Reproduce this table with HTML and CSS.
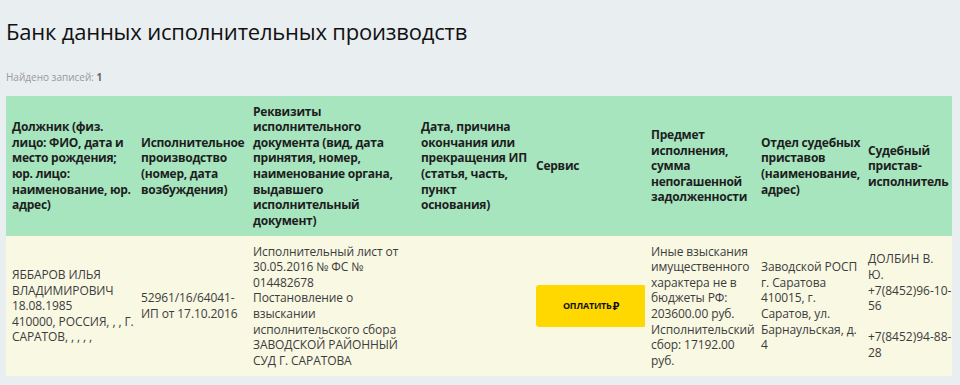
FILE: index.html
```html
<!DOCTYPE html>
<html lang="ru">
<head>
<meta charset="utf-8">
<title>Банк данных исполнительных производств</title>
<link rel="stylesheet" href="styles.css">
</head>
<body>
<div class="page">
  <h1 class="title">Банк данных исполнительных производств</h1>
  <div class="count">Найдено записей: <b>1</b></div>
  <table class="results">
    <colgroup>
      <col class="c1"><col class="c2"><col class="c3"><col class="c4">
      <col class="c5"><col class="c6"><col class="c7"><col class="c8">
    </colgroup>
    <thead>
      <tr>
        <th>Должник (физ. лицо: ФИО, дата и место рождения; юр. лицо: наименование, юр. адрес)</th>
        <th>Исполнительное производство (номер, дата возбуждения)</th>
        <th>Реквизиты исполнительного документа (вид, дата принятия, номер, наименование органа, выдавшего исполнительный документ)</th>
        <th>Дата, причина окончания или прекращения ИП (статья, часть, пункт<br>основания)</th>
        <th>Сервис</th>
        <th>Предмет исполнения, сумма непогашенной задолженности</th>
        <th>Отдел судебных приставов (наименование, адрес)</th>
        <th>Судебный пристав-исполнитель</th>
      </tr>
    </thead>
    <tbody>
      <tr>
        <td>ЯББАРОВ ИЛЬЯ ВЛАДИМИРОВИЧ<br>18.08.1985<br>410000, РОССИЯ, , , Г. САРАТОВ, , , , ,</td>
        <td>52961/16/64041-ИП от 17.10.2016</td>
        <td>Исполнительный лист от 30.05.2016 № ФС № 014482678<br>Постановление о взыскании исполнительского сбора<br>ЗАВОДСКОЙ РАЙОННЫЙ СУД Г. САРАТОВА</td>
        <td></td>
        <td><a class="pay" href="#">ОПЛАТИТЬ<span class="rub">₽</span></a></td>
        <td>Иные взыскания имущественного характера не в бюджеты РФ: 203600.00 руб.<br>Исполнительский сбор: 17192.00 руб.</td>
        <td>Заводской РОСП г. Саратова<br>410015, г. Саратов, ул. Барнаульская, д. 4</td>
        <td class="officer">ДОЛБИН В. Ю.<br>+7(8452)96-10-56<br><br>+7(8452)94-88-28</td>
      </tr>
    </tbody>
  </table>
</div>
</body>
</html>
```

FILE: styles.css
```css
html, body {
  margin: 0;
  padding: 0;
  background: #e9eef1;
}
body {
  font-family: "Open Sans", "Noto Sans", sans-serif;
  color: #333;
}
.page {
  padding: 15px 8px 0 6px;
}
.title {
  margin: 0;
  font-size: 22px;
  line-height: 32px;
  font-weight: 400;
  letter-spacing: -0.2px;
  color: #111;
}
.count {
  margin-top: 23px;
  font-size: 10px;
  line-height: 14px;
  color: #9a9a9a;
}
.count b {
  color: #666;
  font-weight: 700;
}
.results {
  margin-top: 12px;
  width: 946px;
  border-collapse: collapse;
  table-layout: fixed;
  font-size: 12px;
  line-height: 15.6px;
}
.c1 { width: 129px; }
.c2 { width: 112px; }
.c3 { width: 168px; }
.c4 { width: 115px; }
.c5 { width: 115px; }
.c6 { width: 110px; }
.c7 { width: 107px; }
.c8 { width: 90px; }
.results th,
.results td {
  padding: 7px 0 7px 6px;
  text-align: left;
  vertical-align: middle;
  height: 126px;
  box-sizing: content-box;
}
.results th {
  background: #a7e5bf;
  color: #1e1e1e;
  font-weight: 700;
  letter-spacing: -0.25px;
}
.results td {
  background: #f8f8e3;
  color: #3c3c3c;
  letter-spacing: -0.1px;
}
.results td.officer {
  letter-spacing: 0;
}
.pay {
  display: flex;
  align-items: center;
  justify-content: center;
  width: 110px;
  height: 42px;
  background: #ffd800;
  border-radius: 3px;
  color: #111;
  text-decoration: none;
  font-size: 9px;
  font-weight: 700;
  letter-spacing: -0.2px;
}
.rub {
  margin-left: 1px;
  font-size: 11px;
}
```
